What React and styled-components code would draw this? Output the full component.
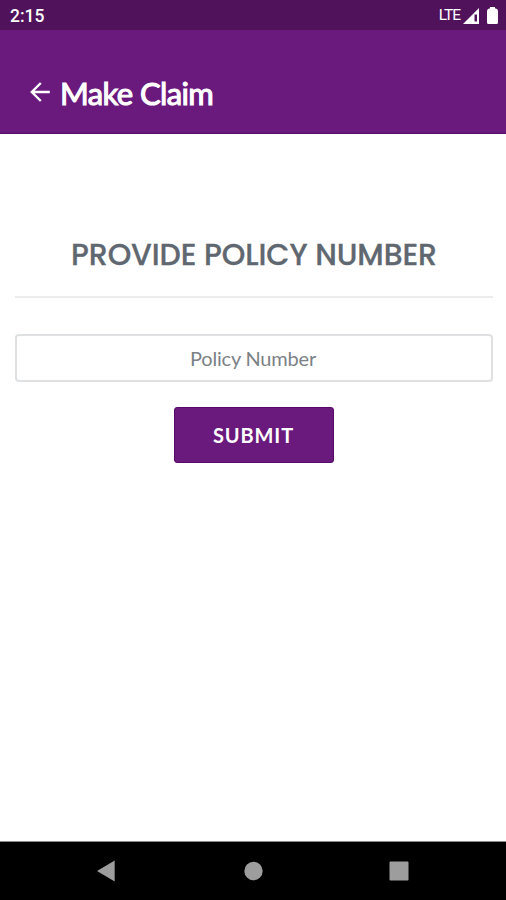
import React from 'react';
import styled, { createGlobalStyle } from 'styled-components';

const App = () => {
  return (
    <Screen>
      <GlobalStyle />
      <StatusBar>
        <Clock>2:15</Clock>
        <StatusIcons>
          <Network>LTE</Network>
          <SignalIcon viewBox="0 0 16 16">
            <path d="M0 16 L16 0 V16 Z" fill="#fff" />
            <path d="M11.5 6.5 H14 V13.5 H11.5 Z" fill="#51125c" />
          </SignalIcon>
          <BatteryIcon viewBox="0 0 11 17">
            <path d="M3 0 H8 V1.5 H9 Q11 2 11 4 V15.5 Q11 17 9.5 17 H1.5 Q0 17 0 15.5 V4 Q0 2 2 1.5 H3 Z" fill="#fff" />
          </BatteryIcon>
        </StatusIcons>
      </StatusBar>
      <Header>
        <BackButton aria-label="Back">
          <svg width="20" height="20" viewBox="0 0 20 20" fill="none" stroke="#fff" strokeWidth="2.4">
            <path d="M19.8 10 H1.8 M10.8 1 L1.8 10 L10.8 19" />
          </svg>
        </BackButton>
        <Title>Make Claim</Title>
      </Header>
      <Content>
        <Heading>PROVIDE POLICY NUMBER</Heading>
        <Divider />
        <PolicyInput type="text" placeholder="Policy Number" />
        <SubmitButton>SUBMIT</SubmitButton>
      </Content>
      <NavBar>
        <NavButton aria-label="Back">
          <svg width="20" height="22" viewBox="0 0 20 22">
            <path d="M0 11 L17.7 0.5 V21.5 Z" fill="#9d9d9d" />
          </svg>
        </NavButton>
        <NavButton aria-label="Home">
          <svg width="20" height="20" viewBox="0 0 20 20">
            <circle cx="10.5" cy="10" r="9.2" fill="#9d9d9d" />
          </svg>
        </NavButton>
        <NavButton aria-label="Recent apps">
          <svg width="20" height="20" viewBox="0 0 20 20">
            <rect x="0.5" y="0.5" width="19" height="19" rx="1" fill="#9d9d9d" />
          </svg>
        </NavButton>
      </NavBar>
    </Screen>
  )
}

export default App

const GlobalStyle = createGlobalStyle`
    * {
        box-sizing: border-box;
    }

    body {
        margin: 0;
        background-color: #fff;
    }
`
const Screen = styled.div`
    display: flex;
    flex-direction: column;
    width: 506px;
    height: 900px;
    overflow: hidden;
    background-color: #fff;
    font-family: Lato, sans-serif;
`
const StatusBar = styled.div`
    display: flex;
    flex-direction: row;
    justify-content: space-between;
    align-items: center;
    flex: none;
    height: 30px;
    padding: 2px 8px 0 10px;
    background-color: #51125c;
    color: #fff;
    font-family: Roboto, sans-serif;
`
const Clock = styled.span`
    font-size: 17.5px;
    font-weight: 500;
    line-height: 28px;
`
const StatusIcons = styled.div`
    display: flex;
    flex-direction: row;
    align-items: center;
    height: 28px;
`
const Network = styled.span`
    font-size: 15.5px;
    line-height: 26px;
    letter-spacing: -1px;
    padding-bottom: 2px;
    margin-right: 3px;
`
const SignalIcon = styled.svg`
    width: 16px;
    height: 16px;
    margin-right: 8px;
    margin-bottom: 1px;
`
const BatteryIcon = styled.svg`
    width: 11px;
    height: 17px;
    margin-bottom: 2px;
`
const Header = styled.header`
    display: flex;
    flex-direction: row;
    align-items: center;
    flex: none;
    height: 104px;
    padding: 22px 0 0 30px;
    background-color: #6a197d;
    border-bottom: 1px solid #570b69;
`
const BackButton = styled.button`
    display: flex;
    padding: 0;
    margin-right: 10px;
    margin-bottom: 2px;
    border: none;
    background: none;
`
const Title = styled.h1`
    margin: 0;
    color: #fff;
    font-size: 31px;
    font-weight: 400;
    line-height: 40px;
    letter-spacing: -0.6px;
    /* regular weight thickened, narrower than the real bold */
    -webkit-text-stroke: 1.1px #fff;
`
const Content = styled.main`
    display: flex;
    flex-direction: column;
    align-items: center;
    flex: 1;
    padding: 100px 13px 0 15px;
`
const Heading = styled.h2`
    margin: 0;
    color: #5f6870;
    font-family: Poppins, Inter, sans-serif;
    font-size: 30px;
    font-weight: 500;
    line-height: 42px;
    letter-spacing: -0.1px;
    white-space: nowrap;
    -webkit-text-stroke: 0.3px #5f6870;
`
const Divider = styled.hr`
    width: 100%;
    height: 2px;
    margin: 20px 0 36px;
    border: none;
    background-color: #ececec;
`
const PolicyInput = styled.input`
    width: 100%;
    height: 48px;
    padding: 0 12px 0 10px;
    border: 2px solid #dfe0e2;
    border-radius: 4px;
    outline: none;
    background-color: #fff;
    color: #495057;
    font-family: Lato, sans-serif;
    font-size: 20px;
    letter-spacing: -0.2px;
    text-align: center;

    &::placeholder {
        color: #7c8185;
        opacity: 1;
    }
`
const SubmitButton = styled.button`
    width: 160px;
    height: 56px;
    margin-top: 25px;
    padding: 0 1px 0 0;
    border: 1px solid #570b69;
    border-radius: 3px;
    background-color: #6a197d;
    color: #fff;
    font-family: Lato, sans-serif;
    font-size: 20px;
    font-weight: 700;
    letter-spacing: 0.9px;
    cursor: pointer;
`
const NavBar = styled.nav`
    display: flex;
    flex-direction: row;
    justify-content: center;
    flex: none;
    height: 59px;
    border-top: 1px solid #8a8a8a;
    background-color: #000;
`
const NavButton = styled.button`
    display: flex;
    justify-content: center;
    align-items: center;
    width: 146px;
    padding: 0;
    border: none;
    background: none;
`
